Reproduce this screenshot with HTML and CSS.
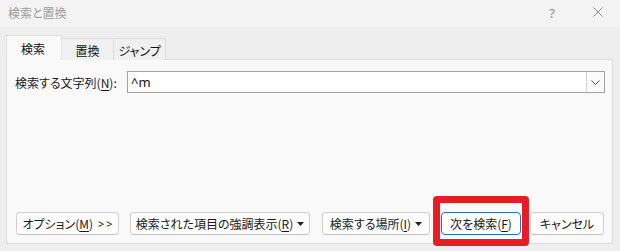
FILE: index.html
```html
<!DOCTYPE html>
<html lang="ja">
<head>
<meta charset="utf-8">
<link rel="stylesheet" href="styles.css">
</head>
<body>
<div class="window">
  <div class="titlebar">
    <span class="title">検索と置換</span>
    <span class="help">?</span>
    <span class="close"><svg width="10" height="10" viewBox="0 0 10 10"><path d="M0.5 0.5 L9.5 9.5 M9.5 0.5 L0.5 9.5" stroke="#8a8a8a" stroke-width="1" fill="none"/></svg></span>
  </div>
  <div class="content">
    <div class="tabs">
      <div class="tab active">検索</div>
      <div class="tab">置換</div>
      <div class="tab">ジャンプ</div>
    </div>
    <div class="panel">
      <div class="row">
        <span class="label">検索する文字列(<u>N</u>):</span>
        <div class="combo">
          <span class="combo-text">^m</span>
          <span class="drop"><svg width="9" height="5" viewBox="0 0 9 5"><path d="M0.5 0.5 L4.5 4.5 L8.5 0.5" stroke="#555" stroke-width="1" fill="none"/></svg></span>
        </div>
      </div>
      <div class="buttons">
        <div class="btn b-opt">オプション(<u>M</u>)<span class="chev">&gt;&gt;</span></div>
        <div class="btn b-hl">検索された項目の強調表示(<u>R</u>)<svg class="caret" width="7" height="4" viewBox="0 0 7 4"><path d="M0 0 H7 L3.5 4 Z" fill="#222"/></svg></div>
        <div class="btn b-where">検索する場所(<u>I</u>)<svg class="caret" width="7" height="4" viewBox="0 0 7 4"><path d="M0 0 H7 L3.5 4 Z" fill="#222"/></svg></div>
        <div class="btn b-next primary">次を検索(<u>F</u>)</div>
        <div class="btn b-cancel">キャンセル</div>
      </div>
    </div>
  </div>
  <div class="highlight"></div>
</div>
</body>
</html>
```
FILE: styles.css
```css
* { box-sizing: border-box; }
html, body { margin: 0; padding: 0; }
body {
  font-family: "Noto Sans CJK JP", "Noto Sans", sans-serif;
  font-feature-settings: "palt";
  font-size: 12px;
  color: #1a1a1a;
  background: #eeeeee;
}
.window {
  position: relative;
  width: 620px;
  height: 251px;
  background: #eeeeee;
  overflow: hidden;
}
.titlebar {
  height: 27px;
  background: #f3f3f3;
  display: flex;
  align-items: center;
  padding-left: 8px;
}
.title {
  color: #9c9c9c;
  font-size: 12px;
  line-height: 1;
  margin-top: -1px;
}
.help {
  margin-left: auto;
  color: #8a8a8a;
  font-family: "Noto Sans", sans-serif;
  font-size: 13px;
  margin-top: -2px;
}
.close {
  display: flex;
  margin-left: 38px;
  margin-right: 17px;
  margin-top: -3px;
}
.content {
  padding: 8px 7px 0 6px;
}
.tabs {
  display: flex;
  align-items: flex-end;
  height: 25px;
  position: relative;
  z-index: 1;
  margin-bottom: -1px;
}
.tab {
  height: 22px;
  width: 53px;
  margin-left: -1px;
  border: 1px solid #dedede;
  border-bottom: none;
  background: #f0f0f0;
  display: flex;
  align-items: center;
  justify-content: center;
  font-size: 12px;
  padding-top: 1px;
  color: #111;
}
.tab.active {
  margin-left: 0;
  width: 56px;
  height: 25px;
  background: #f9f9f9;
  padding-top: 0;
  padding-right: 2px;
}
.panel {
  height: 185px;
  border: 1px solid #dcdcdc;
  background: #f9f9f9;
  display: flex;
  flex-direction: column;
  padding: 11px 7px 8px 8px;
}
.row {
  display: flex;
  align-items: center;
  height: 22px;
}
.label {
  width: 112px;
  font-size: 12px;
  color: #1a1a1a;
}
.label u, .btn u { text-decoration-thickness: 1px; text-underline-offset: 2px; }
.combo {
  flex: 1;
  height: 22px;
  border: 1px solid #a2a2a2;
  background: #ffffff;
  display: flex;
  align-items: center;
}
.combo-text {
  flex: 1;
  padding-left: 3px;
  font-family: "Noto Sans", sans-serif;
  font-size: 13px;
  color: #111;
  margin-top: -1px;
}
.drop {
  width: 18px;
  height: 20px;
  border-left: 1px solid #d4d4d4;
  display: flex;
  align-items: center;
  justify-content: center;
  background: #fbfbfb;
}
.buttons {
  margin-top: auto;
  display: flex;
  align-items: center;
  padding-left: 1px;
}
.btn {
  height: 23px;
  border: 1px solid #d0d0d0;
  border-bottom-color: #c2c2c2;
  border-radius: 4px;
  background: #fdfdfd;
  display: flex;
  align-items: center;
  justify-content: center;
  font-size: 12px;
  color: #1a1a1a;
  white-space: nowrap;
}
.chev {
  margin-left: 5px;
  letter-spacing: 2px;
  font-family: "Noto Sans", sans-serif;
  font-size: 11px;
  margin-right: -2px;
}
.caret { margin-left: 4px; margin-top: 1px; }
.b-opt { width: 103px; }
.b-hl { width: 180px; margin-left: 11px; }
.b-where { width: 108px; margin-left: 12px; }
.b-next { width: 80px; margin-left: 11px; }
.b-cancel { width: 74px; margin-left: 9px; }
.btn.primary {
  border: 1px solid #2a6fc0;
  box-shadow: inset 0 0 0 1px #ffffff;
  color: #1a1a1a;
}
.highlight {
  position: absolute;
  left: 433px;
  top: 196px;
  width: 96px;
  height: 50px;
  border: 7px solid #e61d27;
  border-radius: 4px;
}
```
